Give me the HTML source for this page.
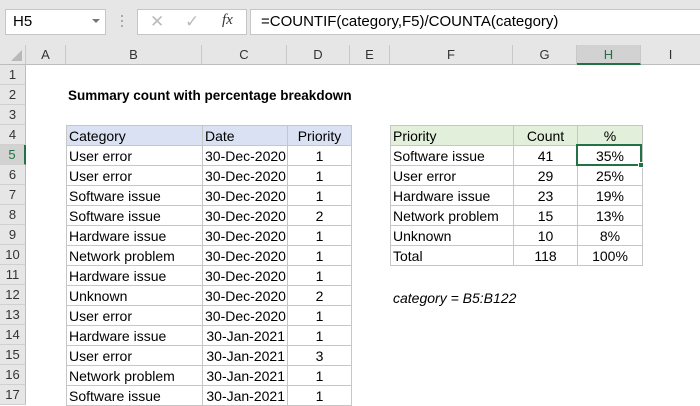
<!DOCTYPE html>
<html><head><meta charset="utf-8"><style>
*{margin:0;padding:0;box-sizing:border-box}
body{width:700px;height:400px;overflow:hidden;background:#fff;font-family:"Liberation Sans",sans-serif;font-size:14px;color:#000;position:relative}
.a{position:absolute}
.tb{left:0;top:0;width:700px;height:45px;background:#e6e6e6}
.box{background:#fff;border:1px solid #c6c6c6}
.hdr{top:45px;height:20px;background:#e6e6e6;border-right:1px solid #c8c8c8;border-bottom:1px solid #bdbdbd;text-align:center;line-height:19px;color:#333;font-size:13px}
.rh{left:0;width:26px;height:20px;background:#e6e6e6;border-bottom:1px solid #d0d0d0;border-right:1px solid #bdbdbd;text-align:center;line-height:20px;color:#333;font-size:13px}
table{position:absolute;border-collapse:collapse;table-layout:fixed}
td{border:1px solid #c6c6c6;height:20px;padding:0 2px;white-space:nowrap;overflow:hidden;line-height:18px;font-size:14px}
.r{text-align:right}.c{text-align:center}
</style></head><body>
<div class="a tb"></div>
<div class="a box" style="left:5px;top:9px;width:101px;height:26px;line-height:24px;padding-left:7px;font-size:15px">H5</div>
<div class="a" style="left:92px;top:19px;width:0;height:0;border-left:4px solid transparent;border-right:4px solid transparent;border-top:4px solid #777"></div>
<div class="a" style="left:121px;top:15px;width:2px;height:14px;background:repeating-linear-gradient(#aaa 0 2px,transparent 2px 5px)"></div>
<div class="a box" style="left:137px;top:9px;width:110px;height:26px"></div>
<div class="a" style="left:150px;top:12px;color:#bbb;font-size:17px">✕</div>
<div class="a" style="left:185px;top:12px;color:#bbb;font-size:17px">✓</div>
<div class="a" style="left:222px;top:12px;color:#333;font-size:15px;font-family:'Liberation Serif',serif;font-style:italic">fx</div>
<div class="a box" style="left:250px;top:9px;width:460px;height:26px;line-height:24px;padding-left:10px;font-size:15px">=COUNTIF(category,F5)/COUNTA(category)</div>

<div class="a hdr" style="left:0;width:26px"></div>
<div class="a" style="left:11px;top:50px;width:0;height:0;border-left:11px solid transparent;border-bottom:11px solid #b8b8b8"></div>
<div class="a hdr" style="left:26px;width:40px">A</div>
<div class="a hdr" style="left:66px;width:136px">B</div>
<div class="a hdr" style="left:202px;width:85px">C</div>
<div class="a hdr" style="left:287px;width:63px">D</div>
<div class="a hdr" style="left:350px;width:40px">E</div>
<div class="a hdr" style="left:390px;width:123px">F</div>
<div class="a hdr" style="left:513px;width:64px">G</div>
<div class="a hdr" style="left:577px;width:64px;background:#d2d2d2;border-bottom:2px solid #217346;color:#217346">H</div>
<div class="a hdr" style="left:641px;width:60px">I</div>

<div class="a rh" style="top:65px">1</div>
<div class="a rh" style="top:85px">2</div>
<div class="a rh" style="top:105px">3</div>
<div class="a rh" style="top:125px">4</div>
<div class="a rh" style="top:145px;background:#d2d2d2;border-right:2px solid #217346;color:#217346">5</div>
<div class="a rh" style="top:165px">6</div>
<div class="a rh" style="top:185px">7</div>
<div class="a rh" style="top:205px">8</div>
<div class="a rh" style="top:225px">9</div>
<div class="a rh" style="top:245px">10</div>
<div class="a rh" style="top:265px">11</div>
<div class="a rh" style="top:285px">12</div>
<div class="a rh" style="top:305px">13</div>
<div class="a rh" style="top:325px">14</div>
<div class="a rh" style="top:345px">15</div>
<div class="a rh" style="top:365px">16</div>
<div class="a rh" style="top:385px">17</div>

<div class="a" style="left:68px;top:87px;font-weight:bold;line-height:18px;font-size:13.5px">Summary count with percentage breakdown</div>

<table style="left:66px;top:125px;width:285px">
<col style="width:136px"><col style="width:85px"><col style="width:64px">
<tr style="background:#d9e1f2"><td>Category</td><td>Date</td><td class="c">Priority</td></tr>
<tr><td>User error</td><td class="r">30-Dec-2020</td><td class="c">1</td></tr>
<tr><td>User error</td><td class="r">30-Dec-2020</td><td class="c">1</td></tr>
<tr><td>Software issue</td><td class="r">30-Dec-2020</td><td class="c">1</td></tr>
<tr><td>Software issue</td><td class="r">30-Dec-2020</td><td class="c">2</td></tr>
<tr><td>Hardware issue</td><td class="r">30-Dec-2020</td><td class="c">1</td></tr>
<tr><td>Network problem</td><td class="r">30-Dec-2020</td><td class="c">1</td></tr>
<tr><td>Hardware issue</td><td class="r">30-Dec-2020</td><td class="c">1</td></tr>
<tr><td>Unknown</td><td class="r">30-Dec-2020</td><td class="c">2</td></tr>
<tr><td>User error</td><td class="r">30-Dec-2020</td><td class="c">1</td></tr>
<tr><td>Hardware issue</td><td class="r">30-Jan-2021</td><td class="c">1</td></tr>
<tr><td>User error</td><td class="r">30-Jan-2021</td><td class="c">3</td></tr>
<tr><td>Network problem</td><td class="r">30-Jan-2021</td><td class="c">1</td></tr>
<tr><td>Software issue</td><td class="r">30-Jan-2021</td><td class="c">1</td></tr>
</table>

<table style="left:390px;top:125px;width:252px">
<col style="width:123px"><col style="width:64px"><col style="width:65px">
<tr style="background:#e2efda"><td>Priority</td><td class="c">Count</td><td class="c">%</td></tr>
<tr><td>Software issue</td><td class="c">41</td><td class="c">35%</td></tr>
<tr><td>User error</td><td class="c">29</td><td class="c">25%</td></tr>
<tr><td>Hardware issue</td><td class="c">23</td><td class="c">19%</td></tr>
<tr><td>Network problem</td><td class="c">15</td><td class="c">13%</td></tr>
<tr><td>Unknown</td><td class="c">10</td><td class="c">8%</td></tr>
<tr><td>Total</td><td class="c">118</td><td class="c">100%</td></tr>
</table>
<div class="a" style="left:576px;top:144px;width:66px;height:22px;border:2px solid #217346"></div>
<div class="a" style="left:638px;top:162px;width:6px;height:6px;background:#217346;border:1px solid #fff"></div>

<div class="a" style="left:393px;top:290px;font-style:italic;font-size:14px">category = B5:B122</div>
</body></html>
